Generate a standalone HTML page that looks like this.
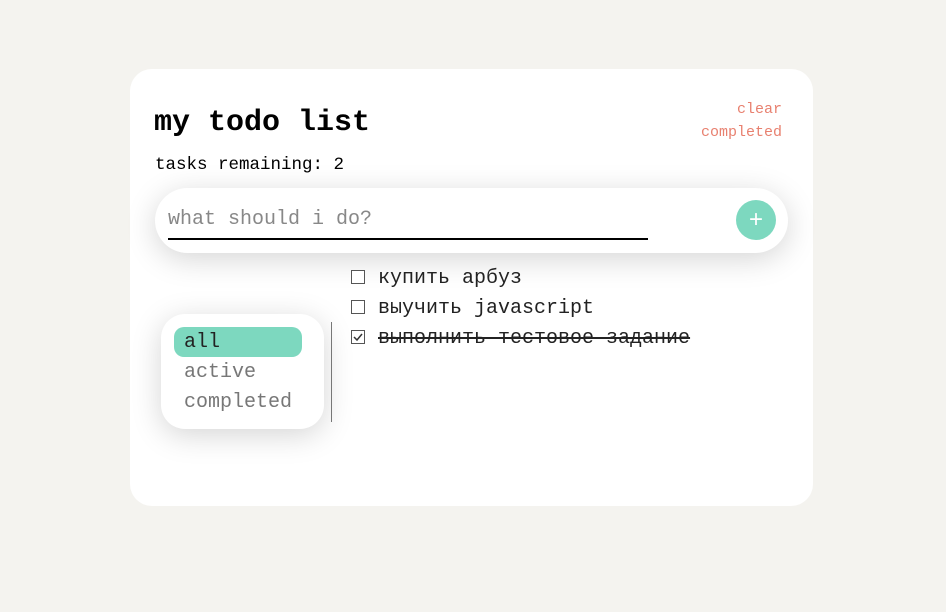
<!DOCTYPE html>
<html><head><meta charset="utf-8"><style>
*{margin:0;padding:0;box-sizing:border-box}
body{width:946px;height:612px;background:#f4f3ef;font-family:"Liberation Mono","DejaVu Sans Mono",monospace;position:relative;overflow:hidden}
.card{position:absolute;left:130px;top:69px;width:683px;height:437px;background:#fff;border-radius:22px}
.abs{position:absolute;white-space:nowrap}
h1{position:absolute;left:154px;top:103px;font-size:30px;font-weight:bold;line-height:40px;color:#000}
.clear{right:164px;top:98px;text-align:right;font-size:15px;line-height:23px;color:#e8806f}
.rem{left:155px;top:154px;font-size:17.5px;line-height:22px;color:#000}
.inp{left:155px;top:188px;width:633px;height:65px;background:#fff;border-radius:33px;box-shadow:0 6px 30px rgba(0,0,0,0.17)}
.ph{left:168px;top:208px;font-size:20px;line-height:24px;color:#888}
.ul{left:168px;top:238px;width:480px;height:2px;background:#000}
.plus{left:736px;top:200px;width:40px;height:40px;border-radius:50%;background:#7dd8bf;color:#fff;font-size:24px;line-height:40px;text-align:center;font-family:"Liberation Sans",sans-serif}
.filt{left:161px;top:314px;width:163px;height:115px;background:#fff;border-radius:24px;box-shadow:0 6px 30px rgba(0,0,0,0.17)}
.pill{left:174px;top:327px;width:128px;height:30px;background:#7dd8bf;border-radius:10px}
.f{left:184px;font-size:20px;line-height:24px;color:#777}
.vl{left:331px;top:322px;width:1px;height:100px;background:#777}
.cb{left:351px;width:14px;height:14px;border:1.5px solid #555;background:#fff}
.t{left:378px;font-size:20px;line-height:24px;color:#222}
</style></head><body>
<div class="card"></div>
<h1>my todo list</h1>
<div class="abs clear">clear<br>completed</div>
<div class="abs rem">tasks remaining: 2</div>
<div class="abs inp"></div>
<div class="abs ph">what should i do?</div>
<div class="abs ul"></div>
<div class="abs plus">+</div>
<div class="abs filt"></div>
<div class="abs pill"></div>
<div class="abs f" style="top:331px;color:#222">all</div>
<div class="abs f" style="top:361px">active</div>
<div class="abs f" style="top:391px">completed</div>
<div class="abs vl"></div>
<div class="abs cb" style="top:270px"></div>
<div class="abs t" style="top:267px">купить арбуз</div>
<div class="abs cb" style="top:300px"></div>
<div class="abs t" style="top:297px">выучить javascript</div>
<div class="abs cb" style="top:330px"><svg width="12" height="12" viewBox="0 0 12 12" style="position:absolute;left:0;top:0"><path d="M2 6 L5 9 L10 3" fill="none" stroke="#333" stroke-width="1.5"/></svg></div>
<div class="abs t" style="top:327px;text-decoration:line-through;text-decoration-thickness:2px">выполнить тестовое задание</div>
</body></html>
